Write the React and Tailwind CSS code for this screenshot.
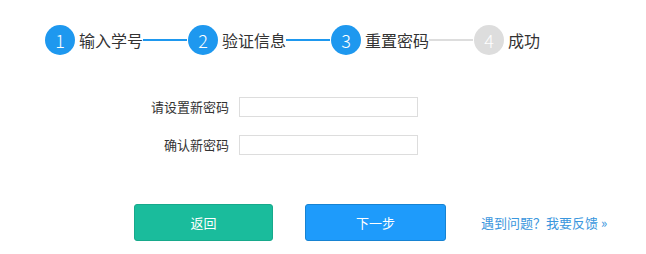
import React from "react";

const font = { fontFamily: '"Microsoft YaHei", "Noto Sans CJK SC", "Noto Sans", sans-serif' };

function Step({ n, label, active, line, lineActive }) {
  return (
    <div className="flex items-center">
      <div
        className={`w-[30px] h-[30px] rounded-full flex items-center justify-center text-white text-[18px] font-light leading-none ${
          active ? "bg-[#1e98ef]" : "bg-[#dddddd]"
        }`}
      >
        {n}
      </div>
      <span className="ml-[4px] text-[16px] text-[#333] leading-none">{label}</span>
      {line && (
        <div className={`w-[44px] h-[2px] mr-[1px] ${lineActive ? "bg-[#1e98ef]" : "bg-[#dddddd]"}`} />
      )}
    </div>
  );
}

export default function App() {
  return (
    <div className="w-[646px] h-[254px] bg-white flex flex-col" style={font}>
      <div className="flex items-center pl-[45px] pt-[25px]">
        <Step n="1" label="输入学号" active line lineActive />
        <Step n="2" label="验证信息" active line lineActive />
        <Step n="3" label="重置密码" active line />
        <Step n="4" label="成功" />
      </div>

      <div className="flex flex-col gap-[18px] mt-[42px]">
        <div className="flex items-center">
          <label className="w-[239px] pr-[10px] text-right text-[13px] text-[#333]">请设置新密码</label>
          <input type="password" className="w-[179px] h-[20px] border border-[#dddddd] outline-none" />
        </div>
        <div className="flex items-center">
          <label className="w-[239px] pr-[10px] text-right text-[13px] text-[#333]">确认新密码</label>
          <input type="password" className="w-[179px] h-[20px] border border-[#dddddd] outline-none" />
        </div>
      </div>

      <div className="flex items-center mt-[49px] pl-[134px]">
        <button className="w-[139px] h-[37px] rounded-[3px] bg-[#1abc9c] border border-[#17a98b] text-white text-[13px]">
          返回
        </button>
        <button className="ml-[32px] w-[141px] h-[37px] rounded-[3px] bg-[#1e9bfb] border border-[#1783d2] text-white text-[13px]">
          下一步
        </button>
        <a href="#" className="ml-[35px] text-[13px] text-[#3a96dd]">
          遇到问题？我要反馈 »
        </a>
      </div>
    </div>
  );
}
